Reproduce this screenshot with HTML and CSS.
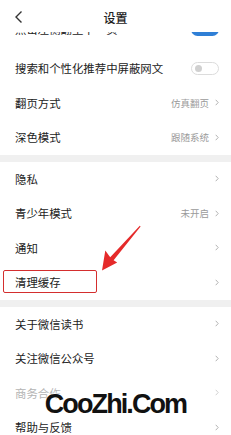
FILE: index.html
```html
<!DOCTYPE html>
<html lang="zh">
<head>
<meta charset="utf-8">
<title>设置</title>
<link rel="stylesheet" href="styles.css">
</head>
<body>
<div class="screen">
  <header class="topbar">
    <svg class="back" width="10" height="14" viewBox="0 0 10 14"><polyline points="7.5,1.5 2,7 7.5,12.5" fill="none" stroke="#333" stroke-width="1.4"/></svg>
    <div class="title">设置</div>
  </header>
  <div class="list">
    <div class="row cut"><span class="label">点击左侧翻至下一页</span><span class="toggle on"></span></div>
    <div class="row"><span class="label">搜索和个性化推荐中屏蔽网文</span><span class="toggle off"><i></i></span></div>
    <div class="row"><span class="label">翻页方式</span><span class="value">仿真翻页</span><svg class="chev" width="4" height="7" viewBox="0 0 4 7"><polyline points="0.7,0.8 3.2,3.5 0.7,6.2" fill="none" stroke="#aaa" stroke-width="0.9"/></svg></div>
    <div class="row"><span class="label">深色模式</span><span class="value">跟随系统</span><svg class="chev" width="4" height="7" viewBox="0 0 4 7"><polyline points="0.7,0.8 3.2,3.5 0.7,6.2" fill="none" stroke="#aaa" stroke-width="0.9"/></svg></div>
    <div class="sep"></div>
    <div class="row"><span class="label">隐私</span><svg class="chev" width="4" height="7" viewBox="0 0 4 7"><polyline points="0.7,0.8 3.2,3.5 0.7,6.2" fill="none" stroke="#aaa" stroke-width="0.9"/></svg></div>
    <div class="row"><span class="label">青少年模式</span><span class="value">未开启</span><svg class="chev" width="4" height="7" viewBox="0 0 4 7"><polyline points="0.7,0.8 3.2,3.5 0.7,6.2" fill="none" stroke="#aaa" stroke-width="0.9"/></svg></div>
    <div class="row"><span class="label">通知</span><svg class="chev" width="4" height="7" viewBox="0 0 4 7"><polyline points="0.7,0.8 3.2,3.5 0.7,6.2" fill="none" stroke="#aaa" stroke-width="0.9"/></svg></div>
    <div class="row"><span class="label">清理缓存</span><svg class="chev" width="4" height="7" viewBox="0 0 4 7"><polyline points="0.7,0.8 3.2,3.5 0.7,6.2" fill="none" stroke="#aaa" stroke-width="0.9"/></svg></div>
    <div class="sep"></div>
    <div class="row"><span class="label">关于微信读书</span><svg class="chev" width="4" height="7" viewBox="0 0 4 7"><polyline points="0.7,0.8 3.2,3.5 0.7,6.2" fill="none" stroke="#aaa" stroke-width="0.9"/></svg></div>
    <div class="row"><span class="label">关注微信公众号</span><svg class="chev" width="4" height="7" viewBox="0 0 4 7"><polyline points="0.7,0.8 3.2,3.5 0.7,6.2" fill="none" stroke="#aaa" stroke-width="0.9"/></svg></div>
    <div class="row faded"><span class="label">商务合作</span><svg class="chev" width="4" height="7" viewBox="0 0 4 7"><polyline points="0.7,0.8 3.2,3.5 0.7,6.2" fill="none" stroke="#ccc" stroke-width="0.9"/></svg></div>
    <div class="row"><span class="label">帮助与反馈</span><svg class="chev" width="4" height="7" viewBox="0 0 4 7"><polyline points="0.7,0.8 3.2,3.5 0.7,6.2" fill="none" stroke="#aaa" stroke-width="0.9"/></svg></div>
  </div>

  <div class="highlight"></div>
  <svg class="arrow" width="231" height="435" viewBox="0 0 231 435">
    <polygon points="140.6,226.4 113.6,260.3 117.2,262.6 102,270.5 105.3,250.6 110.2,257.3 139.8,225.8" fill="#e52a2a"/>
  </svg>
  <div class="watermark">CooZhi.Com</div>
</div>
</body>
</html>
```

FILE: styles.css
```css
* { box-sizing: border-box; }
html, body {
  margin: 0;
  padding: 0;
  background: #fff;
}
body {
  width: 231px;
  height: 435px;
  overflow: hidden;
  font-family: "Noto Sans CJK SC", "Noto Sans", sans-serif;
  color: #222;
}
.screen {
  position: relative;
  width: 231px;
  height: 435px;
  overflow: hidden;
  background: #fff;
}
.topbar {
  height: 32px;
  display: flex;
  align-items: center;
  justify-content: center;
  background: #fff;
  position: relative;
}
.back {
  position: absolute;
  left: 14px;
  top: 10px;
}
.title {
  font-size: 12px;
  font-weight: 500;
  color: #222;
  line-height: 14px;
  margin-top: 3px;
}
.list {
  height: 403px;
  overflow: hidden;
}
.row {
  height: 34.5px;
  display: flex;
  align-items: center;
  padding: 0 12px 0 15px;
}
.row.cut {
  margin-top: -15.5px;
  padding-bottom: 9px;
}
.label {
  flex: 1;
  font-size: 11.4px;
  line-height: 14px;
  color: #222;
  white-space: nowrap;
}
.faded .label { color: #b4b4b4; }
.value {
  font-size: 9.5px;
  color: #9a9a9a;
  margin-right: 6px;
  line-height: 12px;
}
.chev { display: block; }
.sep {
  height: 7px;
  background: #f0f0f0;
}
.toggle {
  width: 28px;
  height: 13px;
  border-radius: 7px;
  display: flex;
  align-items: center;
}
.toggle.on {
  background: #2f7fd6;
}
.toggle.off {
  border: 1px solid #dcdcdc;
  background: #fff;
  padding-left: 3px;
}
.toggle.off i {
  width: 7px;
  height: 7px;
  border-radius: 50%;
  background: #d0d0d0;
}
.highlight {
  position: absolute;
  left: 3px;
  top: 270px;
  width: 94px;
  height: 23px;
  border: 1.6px solid #d42e2e;
  border-radius: 2px;
}
.arrow {
  position: absolute;
  left: 0;
  top: 0;
}
.watermark {
  position: absolute;
  left: 0;
  right: 0;
  top: 391px;
  text-align: center;
  font-family: "Liberation Sans", Arial, sans-serif;
  font-weight: bold;
  font-size: 27px;
  line-height: 27px;
  letter-spacing: -1.9px;
  color: #111;
  text-shadow: 0 0 2px #fff, 0 0 3px #fff;
}
```
